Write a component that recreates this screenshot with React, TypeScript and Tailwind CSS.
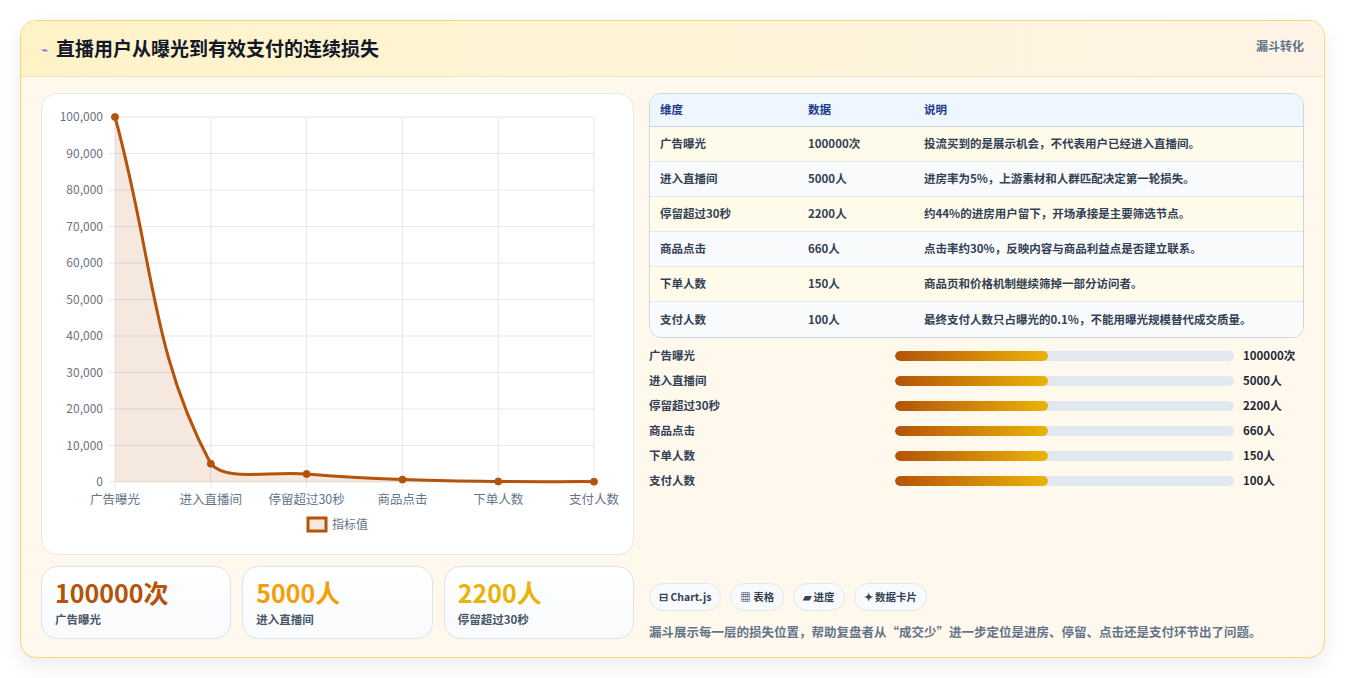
import React from "react";

const rows = [
  ["广告曝光", "100000次", "投流买到的是展示机会，不代表用户已经进入直播间。"],
  ["进入直播间", "5000人", "进房率为5%，上游素材和人群匹配决定第一轮损失。"],
  ["停留超过30秒", "2200人", "约44%的进房用户留下，开场承接是主要筛选节点。"],
  ["商品点击", "660人", "点击率约30%，反映内容与商品利益点是否建立联系。"],
  ["下单人数", "150人", "商品页和价格机制继续筛掉一部分访问者。"],
  ["支付人数", "100人", "最终支付人数只占曝光的0.1%，不能用曝光规模替代成交质量。"],
];
const vals = [100000, 5000, 2200, 660, 150, 100];

function Chart() {
  // coords relative to card (card at 40,92)
  const x0 = 73, x1 = 552, yT = 23, yB = 388;
  const pts = vals.map((v, i) => [x0 + (i * (x1 - x0)) / 5, yB - (v / 100000) * (yB - yT)]);
  const t = 0.4;
  let d = `M${pts[0][0]},${pts[0][1]}`;
  const cp = pts.map((p, i) => {
    const prev = pts[i - 1] || p, next = pts[i + 1] || p;
    const d01 = Math.hypot(p[0] - prev[0], p[1] - prev[1]);
    const d12 = Math.hypot(next[0] - p[0], next[1] - p[1]);
    const s = d01 + d12 || 1;
    const fa = (t * d01) / s, fb = (t * d12) / s;
    return {
      prev: [p[0] - fa * (next[0] - prev[0]), Math.min(yB, p[1] - fa * (next[1] - prev[1]))],
      next: [p[0] + fb * (next[0] - prev[0]), Math.min(yB, p[1] + fb * (next[1] - prev[1]))],
    };
  });
  for (let i = 1; i < pts.length; i++) {
    d += ` C${cp[i - 1].next[0]},${cp[i - 1].next[1]} ${cp[i].prev[0]},${cp[i].prev[1]} ${pts[i][0]},${pts[i][1]}`;
  }
  const labels = ["广告曝光", "进入直播间", "停留超过30秒", "商品点击", "下单人数", "支付人数"];
  return (
    <svg width="593" height="462" className="block" style={{ fontFamily: "'Noto Sans CJK SC', sans-serif" }}>
      {Array.from({ length: 11 }).map((_, i) => {
        const y = yT + (i * (yB - yT)) / 10;
        return (
          <g key={i}>
            <line x1={x0 - 6} x2={x1} y1={y} y2={y} stroke="#e5e7eb" />
            <text x={x0 - 12} y={y + 4} textAnchor="end" fontSize="12" fill="#6b7280">
              {(100000 - i * 10000).toLocaleString("en-US")}
            </text>
          </g>
        );
      })}
      {pts.map((p, i) => (
        <g key={i}>
          <line x1={p[0]} x2={p[0]} y1={yT} y2={yB + 6} stroke="#e5e7eb" />
          <text x={p[0]} y={yB + 22} textAnchor="middle" fontSize="12.5" fill="#64748b">{labels[i]}</text>
        </g>
      ))}
      <path d={`${d} L${x1},${yB} L${x0},${yB} Z`} fill="rgba(180,83,9,0.13)" />
      <path d={d} fill="none" stroke="#b45309" strokeWidth="3" />
      {pts.map((p, i) => (
        <circle key={i} cx={p[0]} cy={p[1]} r="3.5" fill="#b45309" stroke="#b45309" strokeWidth="1" />
      ))}
      <rect x="266" y="424" width="18" height="13" fill="rgba(180,83,9,0.13)" stroke="#b45309" strokeWidth="3" />
      <text x="290" y="435" fontSize="12" fill="#64748b">指标值</text>
    </svg>
  );
}

export default function App() {
  return (
    <div className="w-[1345px] h-[678px] bg-white p-5" style={{ fontFamily: "'Noto Sans CJK SC', 'Noto Sans', sans-serif" }}>
      <div className="rounded-2xl border border-[#f6d77a] bg-[#fff8ec] shadow-[0_8px_20px_rgba(0,0,0,0.08)] overflow-hidden h-[638px]">
        <div className="h-[56px] flex items-center justify-between px-5 bg-gradient-to-r from-[#fef3c7] to-[#fff4e6] border-b border-[#f3e3c0]">
          <div className="flex items-center gap-2">
            <span className="text-[#6366f1] text-xs">⌁</span>
            <h1 className="text-[19px] font-bold text-[#111827]">直播用户从曝光到有效支付的连续损失</h1>
          </div>
          <span className="text-[12px] font-bold text-[#64748b] self-start mt-4">漏斗转化</span>
        </div>
        <div className="flex gap-[15px] px-5 pt-4">
          <div className="w-[593px] flex flex-col gap-[11px]">
            <div className="h-[462px] bg-white rounded-2xl border border-[#e5e7eb]"><Chart /></div>
            <div className="grid grid-cols-3 gap-[11px]">
              {[["100000次", "text-[#b45309]", "广告曝光"], ["5000人", "text-[#f59e0b]", "进入直播间"], ["2200人", "text-[#eab308]", "停留超过30秒"]].map(([v, c, l]) => (
                <div key={l} className="h-[73px] rounded-2xl border border-[#dbe3ef] bg-gradient-to-b from-white to-[#f8fafc] px-[13px] pt-[9px]">
                  <div className={`text-[25px] font-bold leading-[32px] ${c}`}>{v}</div>
                  <div className="text-[11.5px] font-bold text-[#475569] mt-[3px]">{l}</div>
                </div>
              ))}
            </div>
          </div>
          <div className="flex-1 flex flex-col">
            <div className="rounded-xl border border-[#cbd5e1] overflow-hidden text-[11.5px] font-bold text-[#334155]">
              <div className="flex h-[33px] items-center bg-[#eef6ff] text-[#1e3a8a] border-b border-[#cbd5e1]">
                <div className="w-[158px] pl-[10px]">维度</div><div className="w-[116px]">数据</div><div>说明</div>
              </div>
              {rows.map((r, i) => (
                <div key={i} className={`flex h-[35px] items-center ${i % 2 ? "bg-[#f8fafc]" : "bg-[#fffbeb]"} ${i < 5 ? "border-b border-[#e2e8f0]" : ""}`}>
                  <div className="w-[158px] pl-[10px]">{r[0]}</div><div className="w-[116px]">{r[1]}</div><div>{r[2]}</div>
                </div>
              ))}
            </div>
            <div className="mt-[10px] flex flex-col gap-[9px]">
              {rows.map((r) => (
                <div key={r[0]} className="flex items-center h-[16px] text-[11.5px] font-bold text-[#334155]">
                  <div className="w-[246px]">{r[0]}</div>
                  <div className="w-[339px] h-[10px] rounded-full bg-[#e2e8f0] overflow-hidden">
                    <div className="h-full w-[45%] rounded-full bg-gradient-to-r from-[#b45309] to-[#eab308]" />
                  </div>
                  <div className="ml-[9px] text-[#1f2937]">{r[1]}</div>
                </div>
              ))}
            </div>
            <div className="flex gap-[9px] mt-[94px]">
              {["⊟ Chart.js", "▦ 表格", "▰ 进度", "✦ 数据卡片"].map((c) => (
                <span key={c} className="h-[28px] px-[9px] flex items-center rounded-full border border-[#e2e8f0] bg-[#f8fafc] text-[10.5px] font-bold text-[#334155]">{c}</span>
              ))}
            </div>
            <p className="mt-[12px] text-[12.5px] font-bold text-[#64748b]">漏斗展示每一层的损失位置，帮助复盘者从“成交少”进一步定位是进房、停留、点击还是支付环节出了问题。</p>
          </div>
        </div>
      </div>
    </div>
  );
}
